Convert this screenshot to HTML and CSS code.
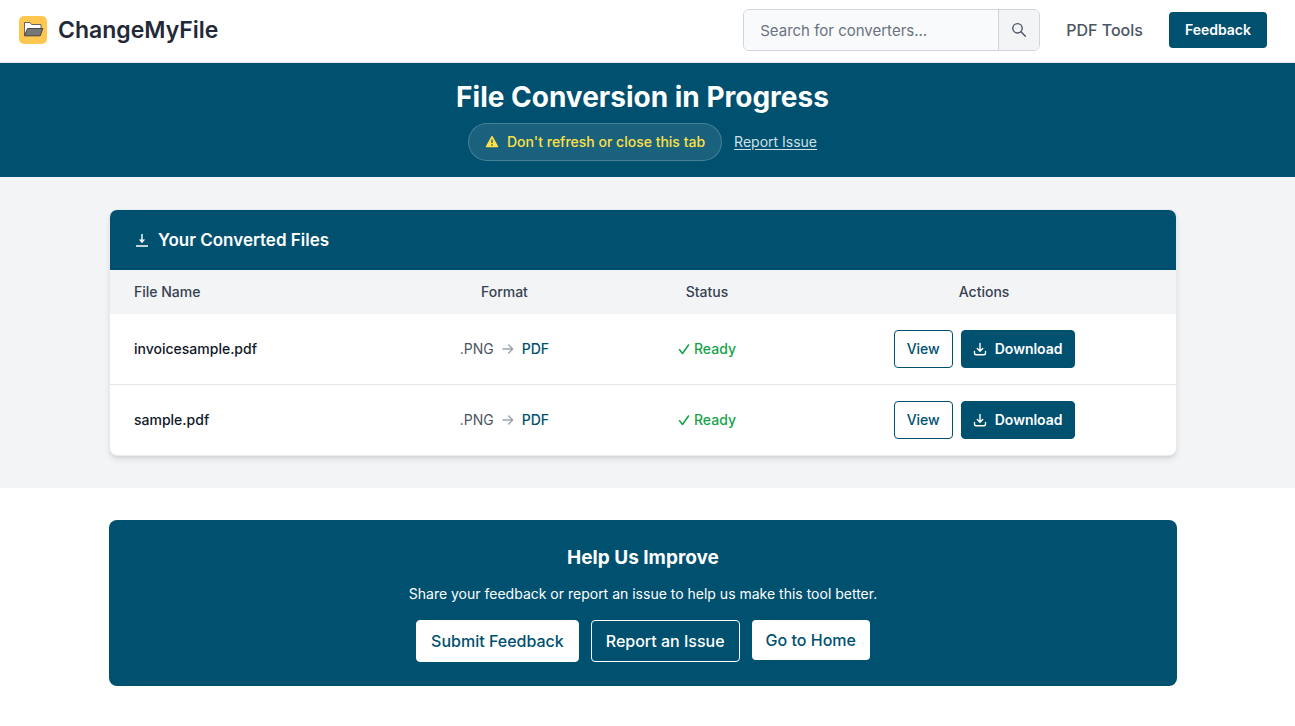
FILE: index.html
```html
<!DOCTYPE html>
<html lang="en">
<head>
    <meta charset="UTF-8">
    <meta name="viewport" content="width=device-width, initial-scale=1.0">
    <title>ChangeMyFile</title>
    <link rel="stylesheet" href="styles.css">
</head>
<body>
    <header class="navbar">
        <a href="#" class="brand">
            <svg class="brand-logo" viewBox="0 0 28 28" aria-hidden="true">
                <rect width="28" height="28" rx="5" fill="#fdc750"/>
                <path d="M5.500 19V6.500h5.500l1.500 2h9.500v4" fill="#fff" stroke="#666" stroke-linejoin="round"/>
                <path d="M5.500 19.800l3-7.300h15.300l-2.600 7.300z" fill="#777" stroke="#444" stroke-linejoin="round"/>
            </svg>
            <span>ChangeMyFile</span>
        </a>
        <nav class="nav-right">
            <form class="search">
                <input type="text" placeholder="Search for converters..." aria-label="Search for converters">
                <button type="button" aria-label="Search">
                    <svg viewBox="0 0 16 16" width="16" height="16" fill="none" stroke="currentColor" stroke-width="1.4" stroke-linecap="round">
                        <circle cx="6.500" cy="6.300" r="4.700"/>
                        <path d="M10 9.800l4.300 4.500"/>
                    </svg>
                </button>
            </form>
            <a href="#" class="nav-link">PDF Tools</a>
            <button type="button" class="btn-feedback">Feedback</button>
        </nav>
    </header>

    <section class="hero">
        <h1>File Conversion in Progress</h1>
        <div class="hero-row">
            <div class="warning">
                <svg viewBox="0 0 14 14" width="14" height="14" aria-hidden="true">
                    <path d="M7 1.500L12.500 11.500h-11z" fill="currentColor" stroke="currentColor" stroke-width="1.4" stroke-linejoin="round"/>
                    <path d="M7 4.500v3.500M7 9.300v1.400" stroke="#1a607e" stroke-width="1.4"/>
                </svg>
                <span>Don't refresh or close this tab</span>
            </div>
            <a href="#" class="report-link">Report Issue</a>
        </div>
    </section>

    <main class="files">
        <div class="card">
            <h2 class="card-title">
                <svg viewBox="0 0 16 16" width="16" height="16" fill="none" stroke="currentColor" stroke-width="1.4" aria-hidden="true">
                    <path d="M8 2v7.500M2 14h12"/>
                    <path d="M4.800 7.500h6.400L8 11.300z" fill="currentColor" stroke="none"/>
                </svg>
                Your Converted Files
            </h2>
            <table>
                <thead>
                    <tr>
                        <th class="col-name">File Name</th>
                        <th class="col-format">Format</th>
                        <th class="col-status">Status</th>
                        <th class="col-actions">Actions</th>
                    </tr>
                </thead>
                <tbody>
                    <tr>
                        <td class="col-name">invoicesample.pdf</td>
                        <td>
                            <div class="format">
                                <span>.PNG</span>
                                <svg class="arrow" viewBox="0 0 12 12" width="12" height="12"><path d="M1 6h9.500M6.700 2l4 4-4 4"/></svg>
                                <span class="target">PDF</span>
                            </div>
                        </td>
                        <td>
                            <div class="status">
                                <svg viewBox="0 0 12 12" width="12" height="12"><path d="M1.500 6.800l3 3.700L10.500 2"/></svg>
                                <span>Ready</span>
                            </div>
                        </td>
                        <td>
                            <div class="actions">
                                <button type="button" class="btn-view">View</button>
                                <button type="button" class="btn-download">
                                    <svg viewBox="0 0 14 14" width="14" height="14"><path d="M7 1.500v7.500M4.300 6.500L7 9.200l2.700-2.700M1.500 9.500v1.700q0 1.500 1.500 1.500h8q1.500 0 1.500-1.500V9.500"/></svg>
                                    Download
                                </button>
                            </div>
                        </td>
                    </tr>
                    <tr>
                        <td class="col-name">sample.pdf</td>
                        <td>
                            <div class="format">
                                <span>.PNG</span>
                                <svg class="arrow" viewBox="0 0 12 12" width="12" height="12"><path d="M1 6h9.500M6.700 2l4 4-4 4"/></svg>
                                <span class="target">PDF</span>
                            </div>
                        </td>
                        <td>
                            <div class="status">
                                <svg viewBox="0 0 12 12" width="12" height="12"><path d="M1.500 6.800l3 3.700L10.500 2"/></svg>
                                <span>Ready</span>
                            </div>
                        </td>
                        <td>
                            <div class="actions">
                                <button type="button" class="btn-view">View</button>
                                <button type="button" class="btn-download">
                                    <svg viewBox="0 0 14 14" width="14" height="14"><path d="M7 1.500v7.500M4.300 6.500L7 9.200l2.700-2.700M1.500 9.500v1.700q0 1.500 1.500 1.500h8q1.500 0 1.500-1.500V9.500"/></svg>
                                    Download
                                </button>
                            </div>
                        </td>
                    </tr>
                </tbody>
            </table>
        </div>
    </main>

    <section class="improve">
        <div class="improve-box">
            <h2>Help Us Improve</h2>
            <p>Share your feedback or report an issue to help us make this tool better.</p>
            <div class="improve-buttons">
                <button type="button" class="btn-light">Submit Feedback</button>
                <button type="button" class="btn-outline">Report an Issue</button>
                <a href="#" class="btn-home">Go to Home</a>
            </div>
        </div>
    </section>
</body>
</html>
```
FILE: styles.css
```css
* {
    box-sizing: border-box;
}

body {
    margin: 0;
    background-color: #fff;
    color: #111827;
    font-family: Inter, "Liberation Sans", sans-serif;
    font-size: 14px;
    line-height: 20px;
}

h1, h2, p {
    margin: 0;
}

a {
    text-decoration: none;
}

button {
    font-family: inherit;
    cursor: pointer;
}

svg {
    flex-shrink: 0;
}

.navbar {
    display: flex;
    justify-content: space-between;
    align-items: center;
    padding: 9px 28px 11px 19px;
    border-bottom: 1px solid #e5e7eb;
}

.brand {
    display: flex;
    align-items: center;
    gap: 11px;
    color: #1f2937;
    font-size: 23px;
    font-weight: 600;
    line-height: 32px;
}

.brand-logo {
    width: 28px;
    height: 28px;
}

.nav-right {
    display: flex;
    align-items: center;
    gap: 26px;
}

.search {
    display: flex;
    width: 297px;
    height: 42px;
    border: 1px solid #d1d5db;
    border-radius: 6px;
    overflow: hidden;
}

.search input {
    flex: 1;
    min-width: 0;
    padding: 0 16px;
    border: none;
    background-color: #f9fafb;
    font-family: inherit;
    font-size: 15px;
}

.search input::placeholder {
    color: #6b7280;
}

.search button {
    display: flex;
    align-items: center;
    justify-content: center;
    width: 41px;
    padding: 0;
    border: none;
    border-left: 1px solid #d1d5db;
    background-color: #f3f4f6;
    color: #4b5563;
}

.nav-link {
    color: #4b5563;
    font-size: 16px;
    font-weight: 500;
}

.btn-feedback {
    padding: 8px 16px;
    border: none;
    border-radius: 4px;
    background-color: #00506f;
    color: #fff;
    font-size: 14px;
    font-weight: 600;
    line-height: 20px;
}

.hero {
    padding: 16px 10px 16px 0;
    background-color: #00506f;
    color: #fff;
    text-align: center;
}

.hero h1 {
    margin-bottom: 8px;
    font-size: 28px;
    font-weight: 700;
    line-height: 36px;
}

.hero-row {
    display: flex;
    justify-content: center;
    align-items: center;
    gap: 12px;
}

.warning {
    display: flex;
    align-items: center;
    gap: 8px;
    padding: 8px 16px;
    border: 1px solid rgba(255, 255, 255, 0.2);
    border-radius: 19px;
    background-color: rgba(255, 255, 255, 0.1);
    color: #fde047;
    font-weight: 500;
}

.report-link {
    color: #cfe0e8;
    text-decoration: underline;
    text-underline-offset: 2px;
}

.files {
    padding: 32px 118px 32px 109px;
    background-color: #f3f4f6;
}

.card {
    border: 1px solid #e8eaed;
    border-radius: 8px;
    background-color: #fff;
    box-shadow: 0 4px 6px -1px rgba(0, 0, 0, 0.1), 0 2px 4px -2px rgba(0, 0, 0, 0.1);
    overflow: hidden;
}

.card-title {
    display: flex;
    align-items: center;
    gap: 8px;
    padding: 16px 24px;
    background-color: #00506f;
    color: #fff;
    font-size: 17px;
    font-weight: 600;
    line-height: 28px;
}

table {
    width: 100%;
    border-collapse: collapse;
    table-layout: fixed;
}

th {
    padding: 12px 24px;
    background-color: #f3f4f6;
    color: #374151;
    font-weight: 500;
    text-align: center;
}

td {
    padding: 16px 24px;
}

tbody tr + tr {
    border-top: 1px solid #e5e7eb;
}

.col-name {
    width: 26%;
    text-align: left;
    font-weight: 500;
}

.col-format {
    width: 22%;
}

.col-status {
    width: 16%;
}

.col-actions {
    width: 36%;
}

.format,
.status,
.actions {
    display: flex;
    justify-content: center;
    align-items: center;
    gap: 8px;
}

.format {
    color: #4b5563;
}

.format .target {
    color: #00506f;
    font-weight: 500;
}

.arrow,
.status svg,
.btn-download svg {
    fill: none;
    stroke: currentColor;
    stroke-width: 1.4;
    stroke-linecap: round;
    stroke-linejoin: round;
}

.arrow {
    color: #9ca3af;
}

.status {
    gap: 4px;
    color: #16a34a;
    font-weight: 500;
}

.status svg {
    stroke-width: 1.6;
}

.btn-view,
.btn-download {
    padding: 8px 12px;
    border: 1px solid #00506f;
    border-radius: 4px;
    font-size: 14px;
    font-weight: 500;
    line-height: 20px;
}

.btn-view {
    background-color: #fff;
    color: #00506f;
}

.btn-download {
    display: flex;
    align-items: center;
    gap: 8px;
    padding: 8px 11px;
    background-color: #00506f;
    color: #fff;
    font-weight: 600;
}

.improve {
    padding: 32px 118px 40px 109px;
}

.improve-box {
    padding: 24px;
    border-radius: 8px;
    background-color: #00506f;
    color: #fff;
    text-align: center;
}

.improve-box h2 {
    margin-bottom: 12px;
    font-size: 19px;
    font-weight: 700;
    line-height: 28px;
}

.improve-box p {
    margin-bottom: 16px;
}

.improve-buttons {
    display: flex;
    justify-content: center;
    align-items: flex-start;
    gap: 12px;
}

.btn-light,
.btn-outline,
.btn-home {
    padding: 8px 14px;
    border: 1px solid #fff;
    border-radius: 4px;
    background-color: #fff;
    color: #00506f;
    font-size: 16px;
    font-weight: 500;
    line-height: 24px;
}

.btn-outline {
    background-color: transparent;
    color: #fff;
}

.btn-home {
    border: none;
}
```
